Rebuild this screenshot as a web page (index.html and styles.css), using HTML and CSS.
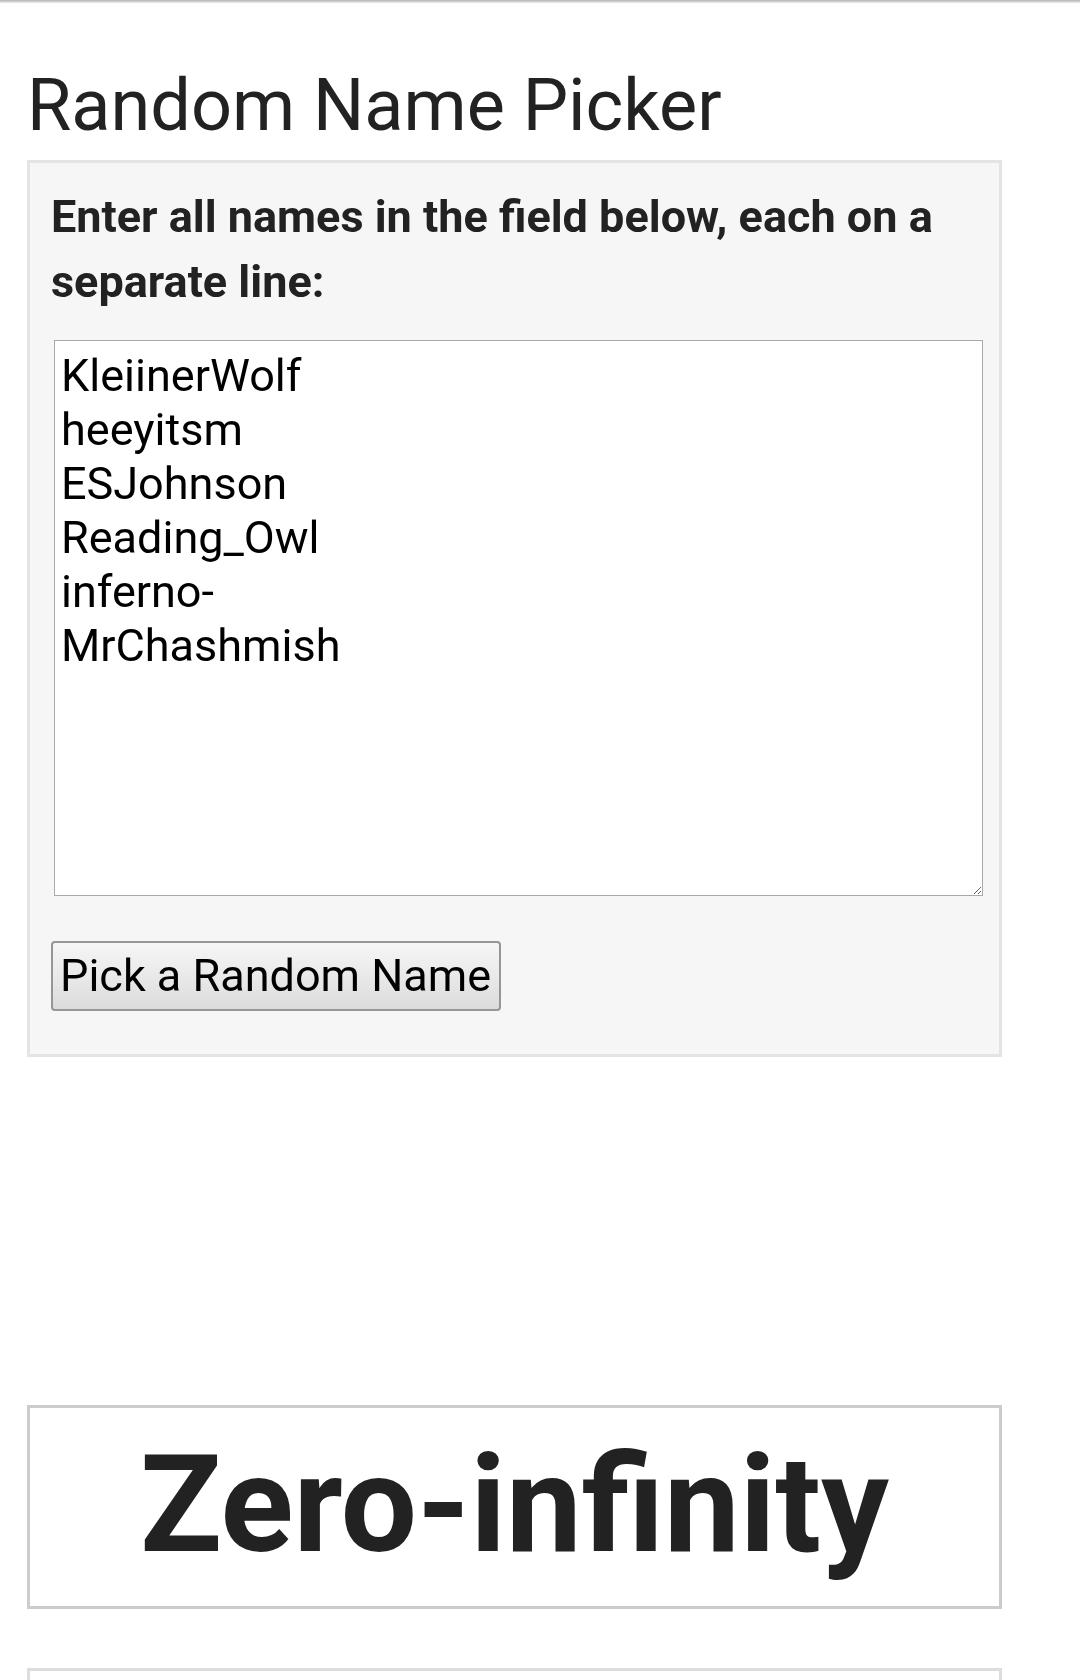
FILE: index.html
```html
<!DOCTYPE html>
<html lang="en">
<head>
    <meta charset="UTF-8">
    <title>Random Name Picker</title>
    <link rel="stylesheet" href="styles.css">
</head>
<body>
    <div class="topbar"></div>
    <div class="page">
        <h1 class="title">Random Name Picker</h1>

        <div class="picker">
            <label class="picker-label" for="names">Enter all names in the field below, each on a separate line:</label>
            <textarea id="names" class="names">Lucas_Moon
KleiinerWolf
heeyitsm
ESJohnson
Reading_Owl
inferno-
MrChashmish








</textarea>
            <button class="pick-btn">Pick a Random Name</button>
        </div>

        <!-- empty slot between the form and the result -->
        <div class="gap-space"></div>

        <div class="result">
            <h2 class="result-name">Zero-infinity</h2>
        </div>
        <div class="result result-next"></div>
    </div>

    <script>
        // keep the list scrolled like in the screenshot
        document.getElementById('names').scrollTop = 48;
    </script>
</body>
</html>
```

FILE: styles.css
```css
body {
    margin: 0;
    padding: 0;
    background-color: #fff;
    font-family: Roboto, "Liberation Sans", sans-serif;
    color: #222;
}

.topbar {
    height: 3px;
    background: linear-gradient(#b4b4b4, #ececec);
}

.page {
    width: 975px;
    margin-left: 27px;
}

.title {
    font-size: 72px;
    font-weight: 400;
    line-height: 84px;
    margin: 61px 0 12px 0;
    color: #222;
}

.picker {
    background-color: #f6f6f6;
    border: 3px solid #e4e4e4;
    padding: 21px 16px 43px 21px;
}

.picker-label {
    display: block;
    font-size: 45px;
    font-weight: 700;
    line-height: 65px;
    color: #222;
}

.names {
    display: block;
    box-sizing: border-box;
    width: 929px;
    height: 556px;
    margin: 26px 0 0 3px;
    padding: 2px 6px;
    border: 1px solid #a9a9a9;
    background-color: #fff;
    font-family: Roboto, "Liberation Sans", sans-serif;
    font-size: 45px;
    line-height: 54px;
    color: #000;
    scrollbar-width: none;
}

.names::-webkit-scrollbar {
    width: 0;
    height: 0;
}

.pick-btn {
    display: block;
    margin-top: 45px;
    padding: 6px 8px 7px 7px;
    border: 2px solid #969696;
    border-radius: 4px;
    background: linear-gradient(#f6f6f6, #dcdcdc);
    font-family: Roboto, "Liberation Sans", sans-serif;
    font-size: 45px;
    line-height: normal;
    color: #000;
}

.gap-space {
    height: 348px;
}

.result {
    border: 3px solid #cccccc;
    padding: 18px 0 21px 0;
    text-align: center;
}

.result-name {
    margin: 0;
    font-size: 135px;
    font-weight: 700;
    line-height: 159px;
    color: #222;
}

.result-next {
    margin-top: 59px;
    height: 100px;
    border-color: #dddddd;
}
```
